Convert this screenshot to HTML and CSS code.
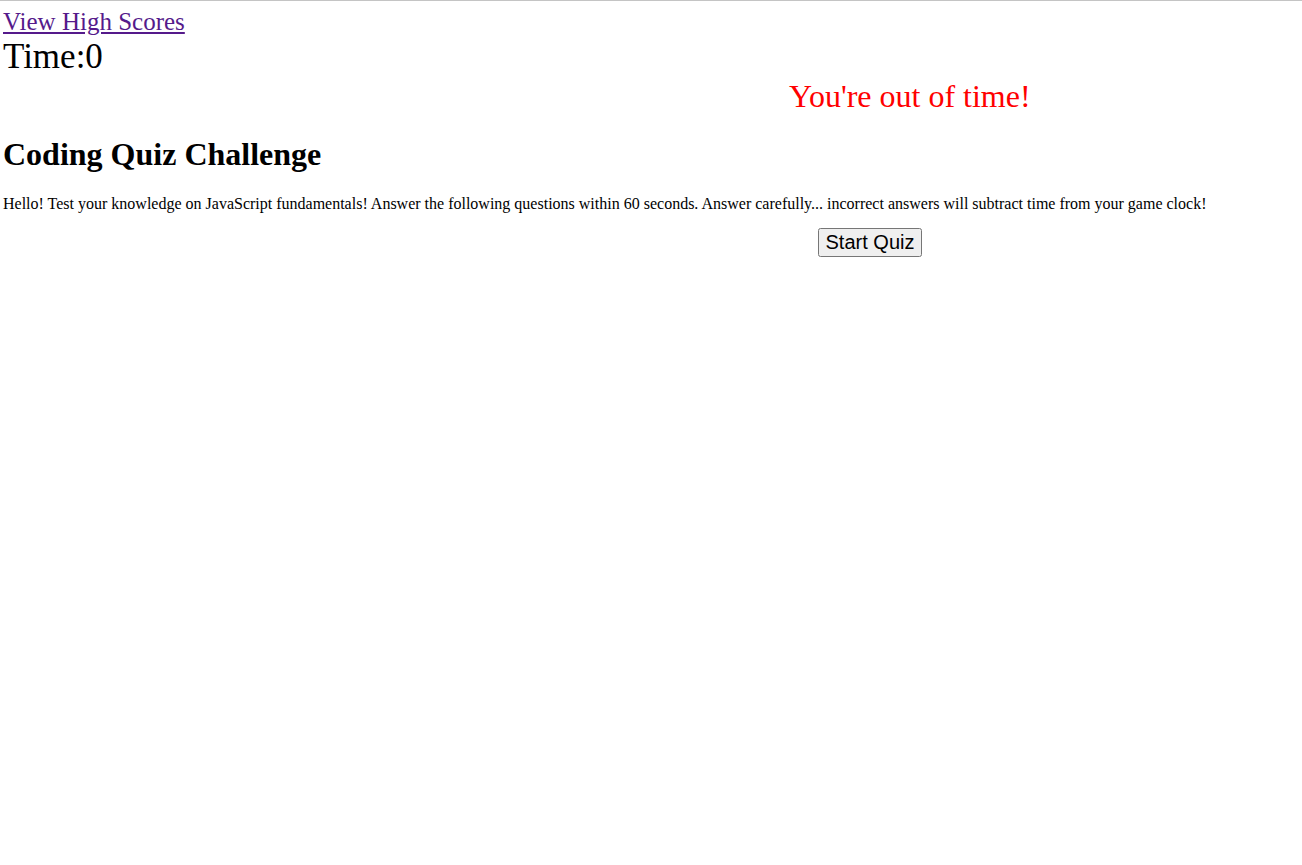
FILE: index.html
```html
<!DOCTYPE html>
<html>
<head>
<meta charset="utf-8">
<title>Coding Quiz</title>
<link rel="stylesheet" href="styles.css">
</head>
<body>
<div class="topline"></div>
<header class="header">
  <a class="scores-link" href="#">View High Scores</a>
  <div class="timer">Time:0</div>
</header>
<div class="message">You're out of time!</div>
<main class="intro">
  <h1 class="title">Coding Quiz Challenge</h1>
  <p class="desc">Hello! Test your knowledge on JavaScript fundamentals! Answer the following questions within 60 seconds. Answer carefully... incorrect answers will subtract time from your game clock!</p>
  <div class="start-row"><button class="start-btn">Start Quiz</button></div>
</main>
</body>
</html>
```
FILE: styles.css
```css
html, body {
  margin: 0;
  padding: 0;
  background: #fff;
}
body {
  font-family: "Liberation Serif", "Times New Roman", serif;
  color: #000;
}
.topline {
  border-top: 1px solid #c4c4c4;
}
.header {
  padding: 7px 3px 0;
}
.scores-link {
  font-size: 25px;
  color: #551a8b;
  text-decoration: underline;
}
.timer {
  font-size: 35px;
  line-height: 42px;
}
.message {
  color: #f00;
  font-size: 32px;
  padding-left: 789px;
  margin-top: 0;
}
.intro {
  padding: 0 3px;
}
.title {
  font-size: 32px;
  margin: 21px 0 22px;
}
.desc {
  font-size: 16px;
  margin: 0 0 15px;
}
.start-row {
  padding-left: 438px;
  text-align: center;
}
.start-btn {
  font-family: "Liberation Sans", Arial, sans-serif;
  font-size: 20px;
  padding: 1px 6px;
}
```
